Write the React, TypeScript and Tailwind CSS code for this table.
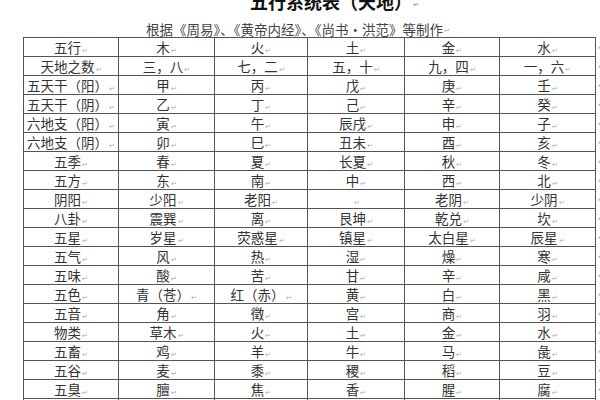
const FONT = `font-['Noto_Sans_CJK_SC','Noto_Sans',sans-serif]`;

const rows: string[][] = [
  ["五行", "木", "火", "土", "金", "水"],
  ["天地之数", "三，八", "七，二", "五，十", "九，四", "一，六"],
  ["五天干（阳）", "甲", "丙", "戊", "庚", "壬"],
  ["五天干（阴）", "乙", "丁", "己", "辛", "癸"],
  ["六地支（阳）", "寅", "午", "辰戌", "申", "子"],
  ["六地支（阴）", "卯", "巳", "丑未", "酉", "亥"],
  ["五季", "春", "夏", "长夏", "秋", "冬"],
  ["五方", "东", "南", "中", "西", "北"],
  ["阴阳", "少阳", "老阳", "", "老阴", "少阴"],
  ["八卦", "震巽", "离", "艮坤", "乾兑", "坎"],
  ["五星", "岁星", "荧惑星", "镇星", "太白星", "辰星"],
  ["五气", "风", "热", "湿", "燥", "寒"],
  ["五味", "酸", "苦", "甘", "辛", "咸"],
  ["五色", "青（苍）", "红（赤）", "黄", "白", "黑"],
  ["五音", "角", "徵", "宫", "商", "羽"],
  ["物类", "草木", "火", "土", "金", "水"],
  ["五畜", "鸡", "羊", "牛", "马", "彘"],
  ["五谷", "麦", "黍", "稷", "稻", "豆"],
  ["五臭", "膻", "焦", "香", "腥", "腐"],
  ["五德", "仁", "礼", "信", "义", "智"],
];

// Word paragraph mark
const Mark = () => (
  <span className="ml-[1px] self-end pb-[2px] text-[7px] leading-[7px] text-[#aaa]">
    ↵
  </span>
);

export default function App() {
  return (
    <div
      className={`relative h-[400px] w-[600px] overflow-hidden bg-white text-[#333] ${FONT}`}
    >
      {/* Title */}
      <div className="-mt-[8px] flex h-[18px] pl-[250px] text-[18px] leading-[18px] font-bold text-[#111]">
        <span>五行系统表（天地）</span>
        <Mark />
      </div>

      {/* Subtitle */}
      <div className="mt-[12px] flex h-[14px] pl-[146px] text-[13.5px] leading-[14px] text-[#444]">
        <span>根据《周易》、《黄帝内经》、《尚书・洪范》等制作</span>
        <Mark />
      </div>

      {/* Table */}
      <table className="mt-[1px] ml-[23px] w-[577px] table-fixed border-collapse text-[13.5px]">
        <colgroup>
          <col className="w-[95px]" />
          <col className="w-[96px]" />
          <col className="w-[93px]" />
          <col className="w-[97px]" />
          <col className="w-[95px]" />
          <col className="w-[96px]" />
          <col className="w-[5px]" />
        </colgroup>
        <tbody>
          {rows.map((row, i) => (
            <tr key={i}>
              {row.map((cell, j) => (
                <td key={j} className="border border-[#555] p-0">
                  <div className="flex h-[18px] items-center justify-center overflow-hidden leading-[18px] whitespace-nowrap">
                    <span>{cell}</span>
                    <Mark />
                  </div>
                </td>
              ))}
              <td className="border-0 p-0 pl-[2px]">
                <div className="h-[18px] text-[7px] leading-[18px] text-[#aaa]">↵</div>
              </td>
            </tr>
          ))}
        </tbody>
      </table>
    </div>
  );
}
